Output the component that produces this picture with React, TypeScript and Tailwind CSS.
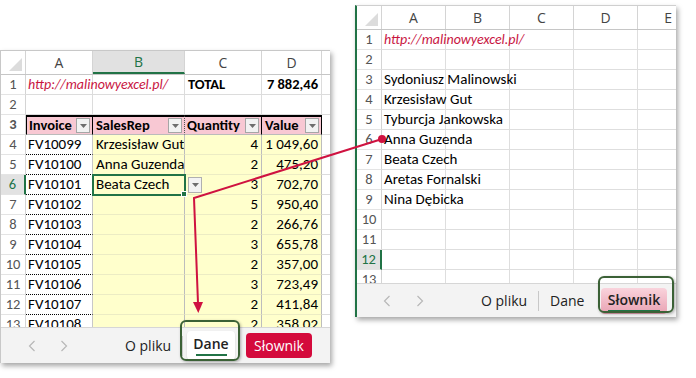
import React from "react";

const cellFont = "font-['Carlito','Lato',sans-serif]";
const uiFont = "font-['Open_Sans','Noto_Sans',sans-serif]";

const leftRows = [
  ["FV10099", "Krzesisław Gut", "4", "1 049,60"],
  ["FV10100", "Anna Guzenda", "2", "475,20"],
  ["FV10101", "Beata Czech", "3", "702,70"],
  ["FV10102", "", "5", "950,40"],
  ["FV10103", "", "2", "266,76"],
  ["FV10104", "", "3", "655,78"],
  ["FV10105", "", "2", "357,00"],
  ["FV10106", "", "3", "723,49"],
  ["FV10107", "", "2", "411,84"],
  ["FV10108", "", "2", "358,02"],
];

const names = [
  "",
  "",
  "Sydoniusz Malinowski",
  "Krzesisław Gut",
  "Tyburcja Jankowska",
  "Anna Guzenda",
  "Beata Czech",
  "Aretas Fornalski",
  "Nina Dębicka",
  "",
  "",
  "",
  "",
];

function Tri() {
  return (
    <svg width="7" height="4" viewBox="0 0 7 4">
      <path d="M0 0h7L3.5 4z" fill="#6e6e6e" />
    </svg>
  );
}

function Filter() {
  return (
    <span className="ml-auto mr-[2px] flex h-[15px] w-[14px] shrink-0 items-center justify-center border border-[#a6a6a6] bg-[#f2f2f2]">
      <Tri />
    </span>
  );
}

function Corner() {
  return (
    <div className="relative w-[25px] shrink-0 border-r border-[#d4d4d4]">
      <svg className="absolute bottom-[3px] right-[3px]" width="13" height="13" viewBox="0 0 13 13">
        <path d="M13 0V13H0z" fill="#dcdcdc" />
      </svg>
    </div>
  );
}

function RowNum({ n, active }: { n: number; active?: boolean }) {
  return (
    <div
      className={`flex w-[25px] shrink-0 items-center justify-center border-b border-b-[#e4e4e4] text-[14.5px] ${
        active
          ? "border-r-2 border-r-[#217346] bg-[#e2e2e2] text-[#217346]"
          : "border-r border-r-[#d4d4d4] text-[#555]"
      }`}
    >
      {n}
    </div>
  );
}

function Chevron({ dir }: { dir: "l" | "r" }) {
  return (
    <svg width="8" height="12" viewBox="0 0 8 12">
      <path d={dir === "l" ? "M6.5 1 1.5 6l5 5" : "M1.5 1l5 5-5 5"} fill="none" stroke="#b8b8b8" strokeWidth="1.2" />
    </svg>
  );
}

function LeftSheet() {
  return (
    <div className={`absolute left-0 top-[50px] w-[330px] border-l border-t border-[#c8c8c8] bg-white shadow-[2px_3px_5px_rgba(0,0,0,0.35)] ${cellFont}`}>
      <div className="h-[276px] overflow-hidden">
        {/* column headers */}
        <div className={`flex h-[24px] border-b border-[#c6c6c6] text-[14px] text-[#444] ${uiFont}`}>
          <Corner />
          <div className="flex w-[67px] items-center justify-center border-r border-[#d4d4d4]">A</div>
          <div className="flex w-[92px] items-center justify-center border-b-2 border-r border-b-[#217346] border-r-[#d4d4d4] bg-[#e1e1e1] text-[#217346]">B</div>
          <div className="flex w-[77px] items-center justify-center border-r border-[#d4d4d4]">C</div>
          <div className="flex w-[60px] items-center justify-center border-r border-[#d4d4d4]">D</div>
          <div className="flex-1" />
        </div>

        {/* row 1 */}
        <div className="flex h-[20px] text-[14.5px]">
          <RowNum n={1} />
          <div className="relative z-10 flex w-[67px] items-center whitespace-nowrap border-b border-r border-[#dcdcdc] pl-[2px] text-[14px] italic text-[#c8143f]">
            http://malinowyexcel.pl/
          </div>
          <div className="w-[92px] border-b border-r border-[#dcdcdc]" />
          <div className="flex w-[77px] items-center border-b border-r border-[#dcdcdc] pl-[3px] font-bold">TOTAL</div>
          <div className="flex w-[60px] items-center justify-end border-b border-r border-[#dcdcdc] pr-[3px] font-bold">7 882,46</div>
          <div className="flex-1 border-b border-[#dcdcdc]" />
        </div>

        {/* row 2 */}
        <div className="flex h-[20px]">
          <RowNum n={2} />
          <div className="w-[67px] border-b border-r border-[#dcdcdc]" />
          <div className="w-[92px] border-b border-r border-[#dcdcdc]" />
          <div className="w-[77px] border-b border-r border-[#dcdcdc]" />
          <div className="w-[60px] border-b border-r border-[#dcdcdc]" />
          <div className="flex-1 border-b border-[#dcdcdc]" />
        </div>

        {/* row 3 - table header */}
        <div className="flex h-[20px] text-[14.5px] font-bold">
          <RowNum n={3} />
          <div className="flex w-[67px] items-center border-l border-r border-t-2 border-b border-black border-b-[#bbb] bg-[#f8c8d3] pl-[2px]">
            Invoice
            <Filter />
          </div>
          <div className="flex w-[92px] items-center border-b border-r border-t-2 border-black border-b-[#bbb] border-r-[#555] border-dotted bg-[#f8c8d3] pl-[3px] [border-top-style:solid] [border-bottom-style:solid]">
            SalesRep
            <Filter />
          </div>
          <div className="flex w-[77px] items-center border-b border-r border-t-2 border-black border-b-[#bbb] bg-[#f8c8d3] pl-[2px]">
            Quantity
            <Filter />
          </div>
          <div className="flex w-[60px] items-center border-b border-r border-t-2 border-black border-b-[#bbb] bg-[#f8c8d3] pl-[3px]">
            Value
            <Filter />
          </div>
          <div className="flex-1 border-b border-[#dcdcdc]" />
        </div>

        {leftRows.map((r, i) => {
          const n = i + 4;
          const active = n === 6;
          return (
            <div key={n} className="flex h-[20px] text-[15px]">
              <RowNum n={n} active={active} />
              <div className="flex w-[67px] items-center border-b border-r border-b-black border-r-[#c8c8c8] bg-white pl-[2px] [border-bottom-style:dotted]">
                {r[0]}
              </div>
              <div
                className={`relative flex w-[92px] items-center whitespace-nowrap border-b border-r border-b-[#ececc4] border-r-[#bdbdbd] bg-[#ffffcc] pl-[3px] ${
                  active ? "z-10 outline-2 -outline-offset-1 outline-[#217346]" : "overflow-hidden"
                }`}
              >
                {r[1]}
                {active && (
                  <>
                    <span className="absolute -bottom-[3px] -right-[3px] h-[6px] w-[6px] border border-white bg-[#217346]" />
                    <span className="absolute left-[95px] top-[2px] flex h-[16px] w-[14px] items-center justify-center border border-[#b0b0b0] bg-[#f3f3f3]">
                      <Tri />
                    </span>
                  </>
                )}
              </div>
              <div className="flex w-[77px] items-center justify-end border-b border-r border-b-[#ececc4] border-r-[#bdbdbd] bg-[#ffffcc] pr-[3px]">
                {r[2]}
              </div>
              <div className="flex w-[60px] items-center justify-end border-b border-r border-b-[#ececc4] border-r-[#bdbdbd] bg-[#ffffcc] pr-[3px]">
                {r[3]}
              </div>
              <div className="flex-1 border-b border-[#dcdcdc]" />
            </div>
          );
        })}
      </div>

      {/* sheet tabs */}
      <div className={`flex h-[36px] items-center border-t border-[#d6d6d6] bg-[#f3f3f3] text-[14px] text-[#222] ${uiFont}`}>
        <div className="ml-[21px] flex w-[20px] justify-center">
          <Chevron dir="l" />
        </div>
        <div className="ml-[12px] flex w-[20px] justify-center">
          <Chevron dir="r" />
        </div>
        <div className="ml-[51px] w-[44px] whitespace-nowrap">O pliku</div>
        <div className="ml-[13px] h-[20px] w-px bg-[#c8c8c8]" />
        <div className="relative ml-[4px] flex h-[29px] w-[48px] items-start justify-center rounded-[4px] bg-white pt-[2px] font-semibold shadow-[0_1px_2px_rgba(0,0,0,0.15)]">
          Dane
          <span className="absolute bottom-[4px] left-[9px] h-[2px] w-[31px] bg-[#217346]" />
        </div>
        <div className="ml-[11px] flex h-[25px] w-[66px] items-center justify-center rounded-[4px] bg-[#d40a3c] text-white">
          Słownik
        </div>
      </div>
    </div>
  );
}

function RightSheet() {
  return (
    <div className={`absolute left-[355px] top-[5px] w-[321px] border-l-2 border-t border-l-[#217346] border-t-[#cfcfcf] bg-white shadow-[2px_3px_5px_rgba(0,0,0,0.35)] ${cellFont}`}>
      <div className="h-[277px] overflow-hidden">
        <div className={`flex h-[24px] border-b border-[#c6c6c6] text-[14px] text-[#444] ${uiFont}`}>
          <Corner />
          <div className="flex w-[64px] items-center justify-center border-r border-[#d4d4d4]">A</div>
          <div className="flex w-[64px] items-center justify-center border-r border-[#d4d4d4]">B</div>
          <div className="flex w-[64px] items-center justify-center border-r border-[#d4d4d4]">C</div>
          <div className="flex w-[64px] items-center justify-center border-r border-[#d4d4d4]">D</div>
          <div className="flex flex-1 items-center justify-end pr-[4px]">E</div>
        </div>
        {names.map((name, i) => {
          const n = i + 1;
          return (
            <div key={n} className="flex h-[20px] text-[15px]">
              <RowNum n={n} active={n === 12} />
              <div
                className={`relative z-10 flex w-[64px] items-center whitespace-nowrap border-b border-r border-[#dedede] pl-[2px] ${
                  n === 1 ? "text-[14px] italic text-[#c8143f]" : ""
                }`}
              >
                {n === 1 ? "http://malinowyexcel.pl/" : name}
              </div>
              <div className="w-[64px] border-b border-r border-[#dedede]" />
              <div className="w-[64px] border-b border-r border-[#dedede]" />
              <div className="w-[64px] border-b border-r border-[#dedede]" />
              <div className="flex-1 border-b border-[#dedede]" />
            </div>
          );
        })}
      </div>

      <div className={`flex h-[34px] items-center border-t border-[#d6d6d6] bg-[#f3f3f3] text-[14px] text-[#222] ${uiFont}`}>
        <div className="ml-[20px] flex w-[20px] justify-center">
          <Chevron dir="l" />
        </div>
        <div className="ml-[13px] flex w-[20px] justify-center">
          <Chevron dir="r" />
        </div>
        <div className="ml-[51px] w-[44px] whitespace-nowrap">O pliku</div>
        <div className="ml-[13px] h-[20px] w-px bg-[#c8c8c8]" />
        <div className="ml-[11px] w-[33px]">Dane</div>
        <div className="relative ml-[18px] flex h-[26px] w-[66px] items-start justify-center rounded-[4px] bg-gradient-to-b from-[#f9d3dc] to-[#e8a2b3] pt-[1px] font-semibold text-[#222]">
          Słownik
          <span className="absolute bottom-[2px] left-[7px] h-[2px] w-[52px] bg-[#217346]" />
        </div>
      </div>
    </div>
  );
}

export default function App() {
  return (
    <div className="relative h-[378px] w-[696px] overflow-hidden bg-white">
      <LeftSheet />
      <RightSheet />

      {/* highlight frames */}
      <div className="absolute left-[180px] top-[320px] h-[41px] w-[60px] rounded-[6px] border-2 border-[#3b6136] shadow-[1px_1px_3px_rgba(0,0,0,0.3)]" />
      <div className="absolute left-[598px] top-[276px] h-[37px] w-[76px] rounded-[6px] border-2 border-[#3b6136] shadow-[1px_1px_3px_rgba(0,0,0,0.3)]" />

      {/* connector arrow */}
      <svg className="pointer-events-none absolute inset-0" width="696" height="378" viewBox="0 0 696 378">
        <polyline points="382,139 194,198 198,303" fill="none" stroke="#cf1240" strokeWidth="2" />
        <polygon points="193,302 203,302 198.3,313" fill="#cf1240" />
        <circle cx="382" cy="139" r="4" fill="#cf1240" />
      </svg>
    </div>
  );
}
